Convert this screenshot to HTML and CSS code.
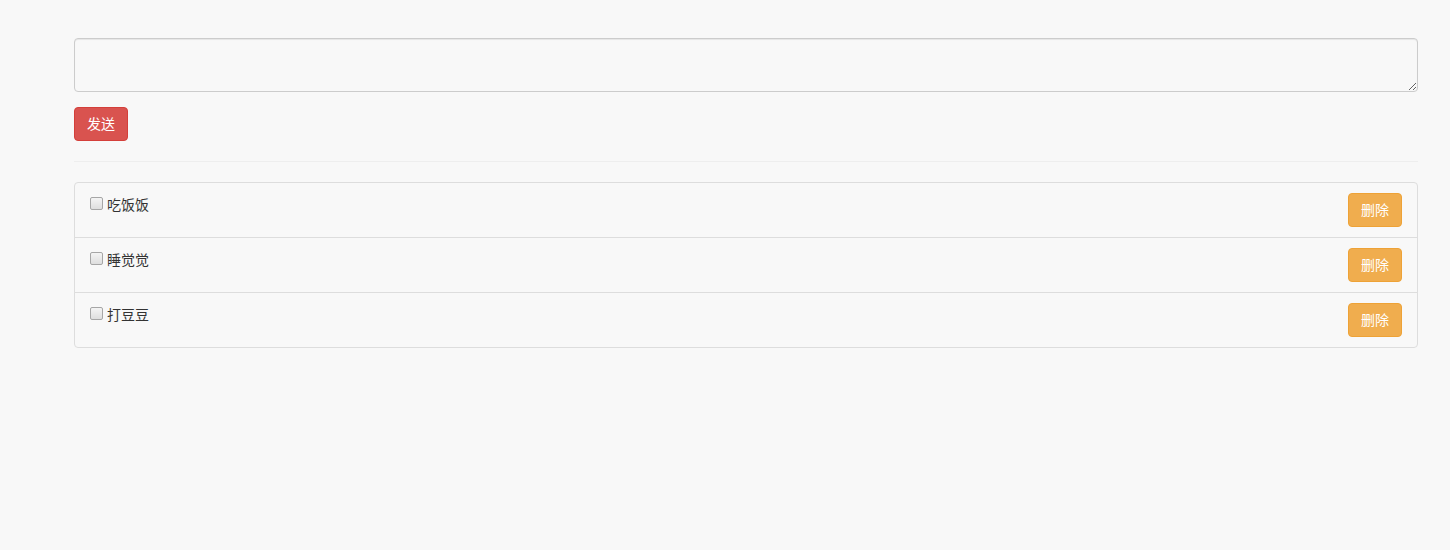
FILE: index.html
```html
<!DOCTYPE html>
<html lang="zh-CN">
  <head>
    <meta charset="UTF-8" />
    <meta name="viewport" content="width=device-width, initial-scale=1.0" />
    <title>Todo</title>
    <link rel="stylesheet" href="styles.css">
  </head>
  <body>
    <div class="wrap">
      <form class="add-form">
        <textarea class="form-control" rows="2"></textarea>
        <button type="button" class="btn btn-danger">发送</button>
      </form>
      <hr>
      <ul class="list-group">
        <li class="list-group-item">
          <label><input type="checkbox"> <span>吃饭饭</span></label>
          <button type="button" class="btn btn-warning">删除</button>
        </li>
        <li class="list-group-item">
          <label><input type="checkbox"> <span>睡觉觉</span></label>
          <button type="button" class="btn btn-warning">删除</button>
        </li>
        <li class="list-group-item">
          <label><input type="checkbox"> <span>打豆豆</span></label>
          <button type="button" class="btn btn-warning">删除</button>
        </li>
      </ul>
    </div>
  </body>
</html>
```

FILE: styles.css
```css
body {
  margin: 0;
  background-color: #f8f8f8;
  font-family: "Liberation Sans", "Noto Sans CJK SC", sans-serif;
  font-size: 14px;
  line-height: 20px;
  color: #333;
}
.wrap {
  padding: 38px 32px 0 74px;
}
.add-form {
  display: flex;
  flex-direction: column;
  align-items: flex-start;
  gap: 15px;
}
.form-control {
  display: block;
  box-sizing: border-box;
  width: 100%;
  height: 54px;
  padding: 6px 12px;
  font: inherit;
  color: #555;
  background-color: #f8f8f8;
  border: 1px solid #ccc;
  border-radius: 4px;
  box-shadow: inset 0 1px 1px rgba(0, 0, 0, .075);
  resize: vertical;
  margin: 0;
}
.btn {
  display: inline-block;
  height: 34px;
  padding: 6px 12px;
  font: inherit;
  font-size: 14px;
  line-height: 20px;
  color: #fff;
  border: 1px solid transparent;
  border-radius: 4px;
  cursor: pointer;
}
.btn-danger {
  background-color: #d9534f;
  border-color: #d43f3a;
}
.btn-warning {
  background-color: #f0ad4e;
  border-color: #eea236;
}
hr {
  margin: 20px 0;
  border: 0;
  border-top: 1px solid #eee;
}
.list-group {
  list-style: none;
  margin: 0;
  padding: 0;
}
.list-group-item {
  display: flex;
  justify-content: space-between;
  align-items: flex-start;
  padding: 10px 15px;
  margin-bottom: -1px;
  background-color: #f8f8f8;
  border: 1px solid #ddd;
}
.list-group-item:first-child {
  border-radius: 4px 4px 0 0;
}
.list-group-item:last-child {
  margin-bottom: 0;
  border-radius: 0 0 4px 4px;
}
.list-group-item label {
  display: flex;
  align-items: flex-start;
  gap: 4px;
}
.list-group-item label span {
  padding-top: 2px;
}
.list-group-item input[type="checkbox"] {
  appearance: none;
  width: 13px;
  height: 13px;
  margin: 4px 0 0;
  border: 1px solid #a6a6a6;
  border-radius: 2px;
  background: linear-gradient(#f4f4f4, #dedede);
}
```
